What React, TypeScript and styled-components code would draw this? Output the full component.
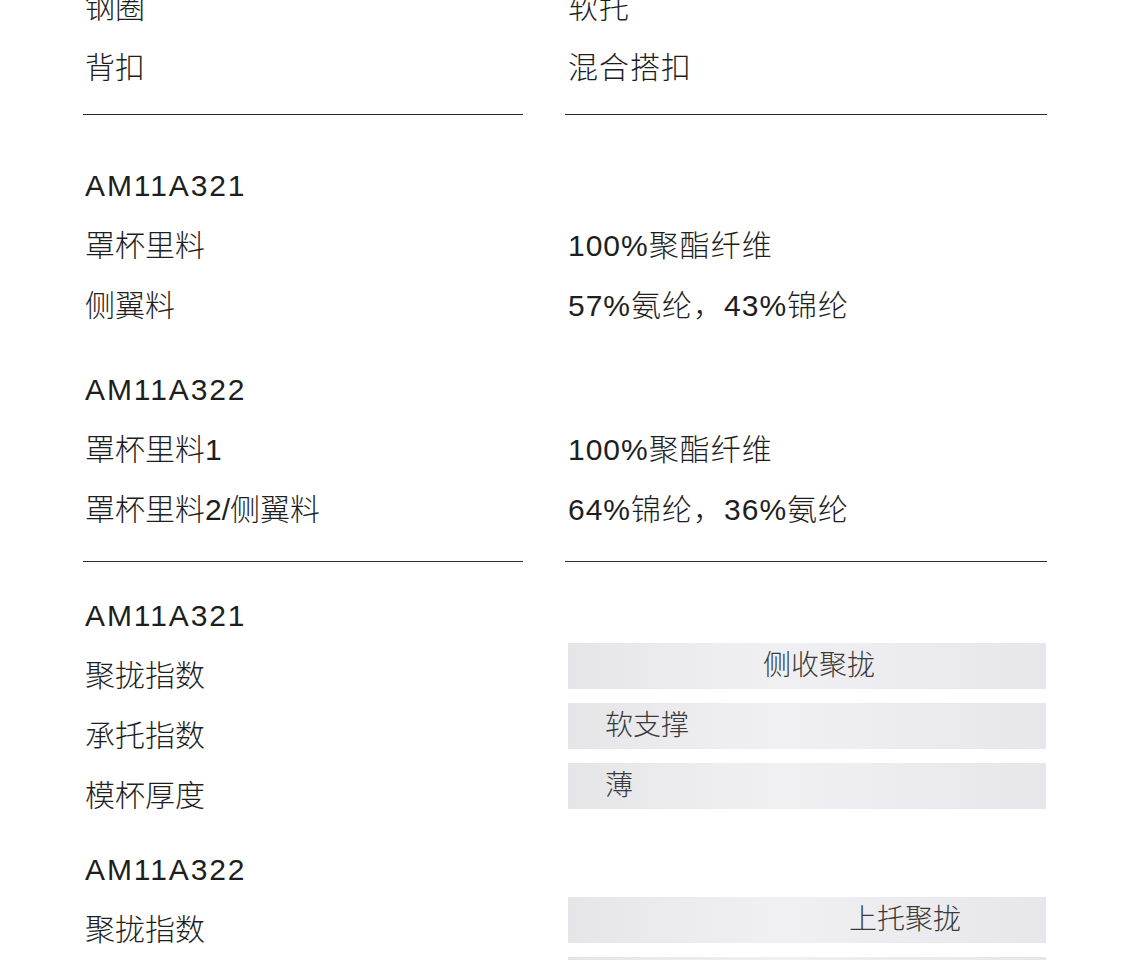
import styled, { createGlobalStyle } from 'styled-components';

const GlobalStyle = createGlobalStyle`
  body {
    margin: 0;
    background: #ffffff;
    font-family: "Liberation Sans", "Noto Sans CJK SC", sans-serif;
    color: #1e1e1e;
  }
`;

const Page = styled.div`
  width: 1125px;
  padding-left: 83px;
  margin-top: -22px;
  box-sizing: border-box;
`;

const Section = styled.div<{ $top?: number }>`
  margin-top: ${(p) => p.$top ?? 0}px;
`;

const Row = styled.div`
  display: grid;
  grid-template-columns: 439px 482px;
  column-gap: 43px;
  height: 60px;
  align-items: center;
`;

const Label = styled.div`
  padding-left: 2px;
  font-size: 30px;
  line-height: 60px;
  font-weight: 300;
  white-space: nowrap;
`;

const Code = styled(Label)`
  letter-spacing: 1.9px;
`;

const Value = styled.div`
  padding-left: 3px;
  font-size: 30px;
  line-height: 60px;
  font-weight: 300;
  letter-spacing: 1px;
  white-space: nowrap;
`;

const Divider = styled.div<{ $top: number }>`
  display: grid;
  grid-template-columns: 440px 482px;
  column-gap: 42px;
  margin-top: ${(p) => p.$top}px;

  &::before,
  &::after {
    content: '';
    height: 1px;
    background: #2c2c2c;
  }
`;

const Bar = styled.div<{ $indent: number }>`
  align-self: start;
  margin-top: -3px;
  margin-left: 3px;
  width: 478px;
  height: 46px;
  box-sizing: border-box;
  padding-left: ${(p) => p.$indent}px;
  background: linear-gradient(
    90deg,
    #e5e5e8 0%,
    #ebebee 20%,
    #f0f0f3 45%,
    #ececf0 70%,
    #e7e7eb 100%
  );
  font-size: 28px;
  line-height: 46px;
  font-weight: 300;
  color: #3a3a3a;
  white-space: nowrap;
`;

type Pair = [string, string];

const materials: { code: string; rows: Pair[] }[] = [
  {
    code: 'AM11A321',
    rows: [
      ['罩杯里料', '100%聚酯纤维'],
      ['侧翼料', '57%氨纶，43%锦纶'],
    ],
  },
  {
    code: 'AM11A322',
    rows: [
      ['罩杯里料1', '100%聚酯纤维'],
      ['罩杯里料2/侧翼料', '64%锦纶，36%氨纶'],
    ],
  },
];

type Level = { label: string; value: string; indent: number };

const indexes: { code: string; top: number; rows: Level[] }[] = [
  {
    code: 'AM11A321',
    top: 0,
    rows: [
      { label: '聚拢指数', value: '侧收聚拢', indent: 195 },
      { label: '承托指数', value: '软支撑', indent: 37 },
      { label: '模杯厚度', value: '薄', indent: 37 },
    ],
  },
  {
    code: 'AM11A322',
    top: 14,
    rows: [
      { label: '聚拢指数', value: '上托聚拢', indent: 281 },
      { label: '承托指数', value: '软支撑', indent: 37 },
    ],
  },
];

export default function App() {
  return (
    <>
      <GlobalStyle />
      <Page>
        <Section>
          <Row>
            <Label>钢圈</Label>
            <Value>软托</Value>
          </Row>
          <Row>
            <Label>背扣</Label>
            <Value>混合搭扣</Value>
          </Row>
        </Section>
        <Divider $top={16} />

        {materials.map((m, i) => (
          <Section key={m.code} $top={i === 0 ? 41 : 24}>
            <Row>
              <Code>{m.code}</Code>
            </Row>
            {m.rows.map(([k, v]) => (
              <Row key={k}>
                <Label>{k}</Label>
                <Value>{v}</Value>
              </Row>
            ))}
          </Section>
        ))}
        <Divider $top={21} />

        <Section $top={24}>
          {indexes.map((g) => (
            <Section key={g.code} $top={g.top}>
              <Row>
                <Code>{g.code}</Code>
              </Row>
              {g.rows.map((r) => (
                <Row key={r.label}>
                  <Label>{r.label}</Label>
                  <Bar $indent={r.indent}>{r.value}</Bar>
                </Row>
              ))}
            </Section>
          ))}
        </Section>
      </Page>
    </>
  );
}
